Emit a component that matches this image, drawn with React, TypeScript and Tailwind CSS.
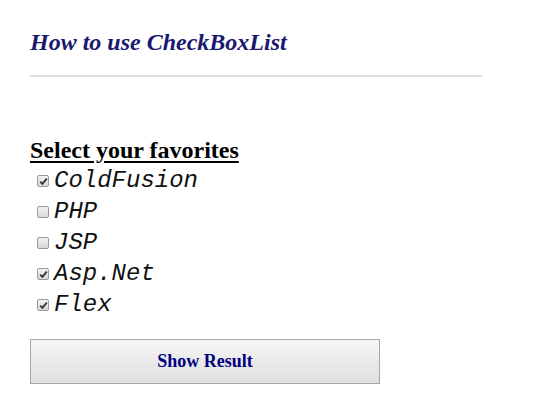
import React from "react";

const items = [
  { label: "ColdFusion", checked: true },
  { label: "PHP", checked: false },
  { label: "JSP", checked: false },
  { label: "Asp.Net", checked: true },
  { label: "Flex", checked: true },
];

function Box({ checked }: { checked: boolean }) {
  return (
    <span className="inline-flex h-[12px] w-[12px] items-center justify-center rounded-[2px] border border-[#9a9a9a] bg-gradient-to-b from-[#f2f2f2] to-[#d8d8d8]">
      {checked && (
        <svg width="9" height="9" viewBox="0 0 9 9">
          <path d="M1.2 4.6 L3.4 6.9 L7.8 1.6" fill="none" stroke="#333" strokeWidth="1.8" />
        </svg>
      )}
    </span>
  );
}

export default function App() {
  return (
    <div className="min-h-[412px] w-[554px] bg-white pl-[30px] pt-[28px]" style={{ fontFamily: '"Liberation Serif", serif' }}>
      <h1 className="text-[24px] font-bold italic leading-[28px] text-[#191970]">How to use CheckBoxList</h1>
      <div className="mt-[19px] h-[2px] w-[452px] bg-[#dcdcdc]" />
      <h2 className="mt-[59px] text-[24px] font-bold leading-[28px] text-black underline underline-offset-[3px]">Select your favorites</h2>
      <div className="mt-[1px] flex flex-col">
        {items.map((it) => (
          <div key={it.label} className="flex h-[31px] items-center">
            <span className="ml-[7px] mr-[5px] flex items-center pt-[1px]">
              <Box checked={it.checked} />
            </span>
            <span className="text-[24px] italic leading-[31px] text-[#111]" style={{ fontFamily: '"Liberation Mono", monospace' }}>
              {it.label}
            </span>
          </div>
        ))}
      </div>
      <button className="mt-[19px] flex h-[45px] w-[350px] items-center justify-center border border-[#a6a6a6] bg-gradient-to-b from-[#f6f6f6] to-[#dfdfdf] text-[18px] font-bold text-[#000080]">
        Show Result
      </button>
    </div>
  );
}
